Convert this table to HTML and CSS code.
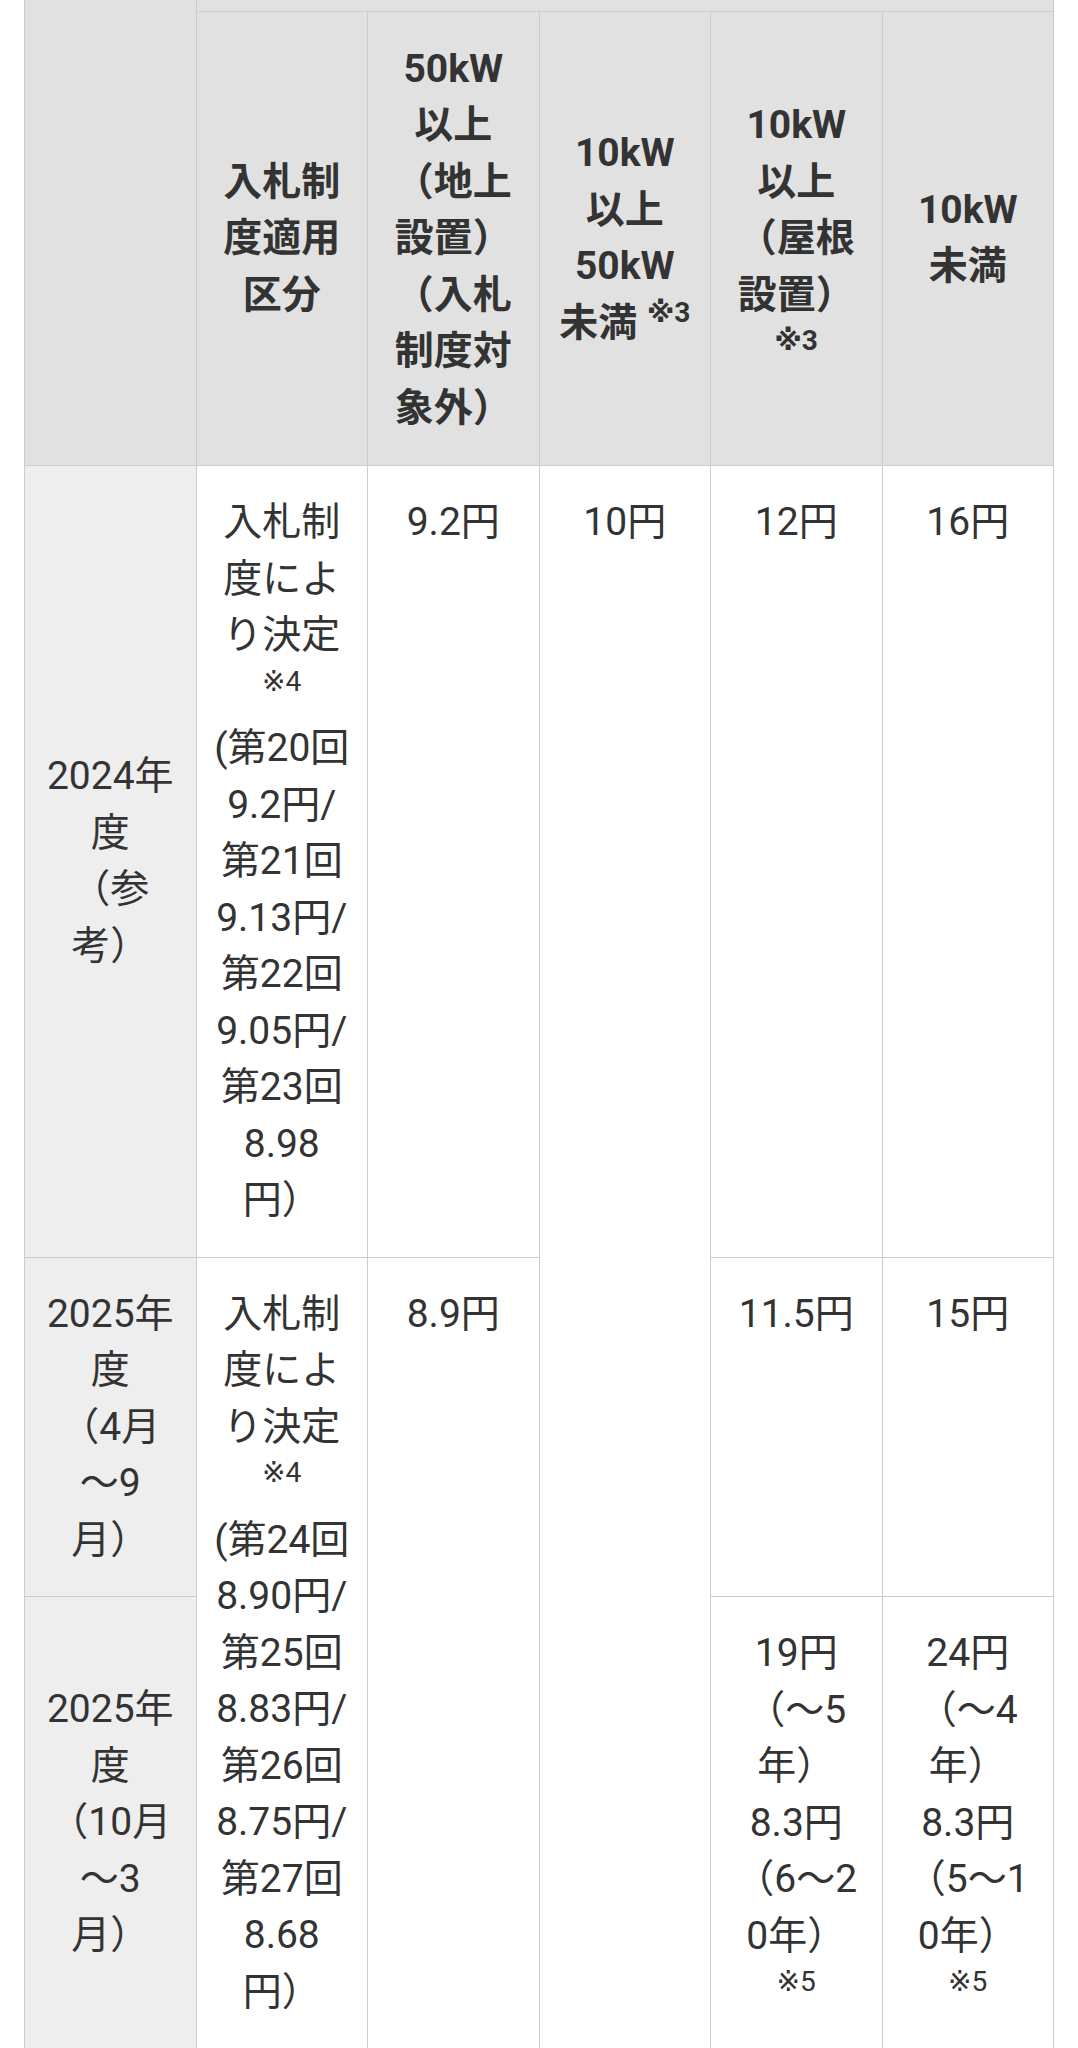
FILE: index.html
```html
<!DOCTYPE html>
<html lang="ja">
<head>
<meta charset="utf-8">
<title>調達価格</title>
<link rel="stylesheet" href="styles.css">
</head>
<body>
<table class="price-table">
  <colgroup>
    <col><col><col><col><col><col>
  </colgroup>
  <thead>
    <tr>
      <th class="head corner" rowspan="2"></th>
      <th class="head" colspan="5">調達価格（1kWhあたり）</th>
    </tr>
    <tr>
      <th class="head">入札制度適用区分</th>
      <th class="head">50kW以上（地上設置）（入札制度対象外）</th>
      <th class="head">10kW以上50kW未満 <sup class="note">※3</sup></th>
      <th class="head">10kW以上（屋根設置）<sup class="note">※3</sup></th>
      <th class="head">10kW未満</th>
    </tr>
  </thead>
  <tbody>
    <tr>
      <th class="year">2024年度<br>（参考）</th>
      <td>入札制度により決定<sup class="note">※4</sup><br>(第20回9.2円/第21回9.13円/第22回9.05円/第23回8.98円）</td>
      <td>9.2円</td>
      <td rowspan="3">10円</td>
      <td>12円</td>
      <td>16円</td>
    </tr>
    <tr>
      <th class="year">2025年度<br>（4月～9月）</th>
      <td rowspan="2">入札制度により決定<sup class="note">※4</sup><br>(第24回8.90円/第25回8.83円/第26回8.75円/第27回8.68円）</td>
      <td rowspan="2">8.9円</td>
      <td>11.5円</td>
      <td>15円</td>
    </tr>
    <tr>
      <th class="year">2025年度<br>（10月～3月）</th>
      <td rowspan="2">19円（～5年）<br>8.3円（6～20年）<sup class="note">※5</sup></td>
      <td rowspan="2">24円（～4年）<br>8.3円（5～10年）<sup class="note">※5</sup></td>
    </tr>
    <tr>
      <th class="year">2026年度</th>
      <td>入札制度により決定</td>
      <td>8.6円</td>
      <td>8.6円</td>
    </tr>
  </tbody>
</table>
</body>
</html>
```
FILE: styles.css
```css
html, body {
  background: #ffffff;
}

body {
  margin: 0 24px;
  font-family: Roboto, "Noto Sans CJK JP", sans-serif;
  font-size: 39px;
  line-height: 56.5px;
  color: #333333;
  text-spacing-trim: space-all;
}

.price-table {
  width: 100%;
  table-layout: fixed;
  border-collapse: collapse;
  margin-top: -105px;
}

.price-table th,
.price-table td {
  border: 1px solid #cccccc;
  padding: 28px 17px;
  text-align: center;
}

.price-table .head {
  background: #e1e1e1;
  font-weight: 700;
  vertical-align: middle;
  padding: 29px 17px;
}

.year {
  background: #eeeeee;
  font-weight: 400;
  vertical-align: middle;
  word-break: break-all;
}

.price-table td {
  background: #ffffff;
  vertical-align: top;
  word-break: break-all;
}

.note {
  font-family: Roboto, "DejaVu Sans", "Noto Sans CJK JP", sans-serif;
  font-size: 0.72em;
  line-height: 1;
  white-space: nowrap;
}
```
